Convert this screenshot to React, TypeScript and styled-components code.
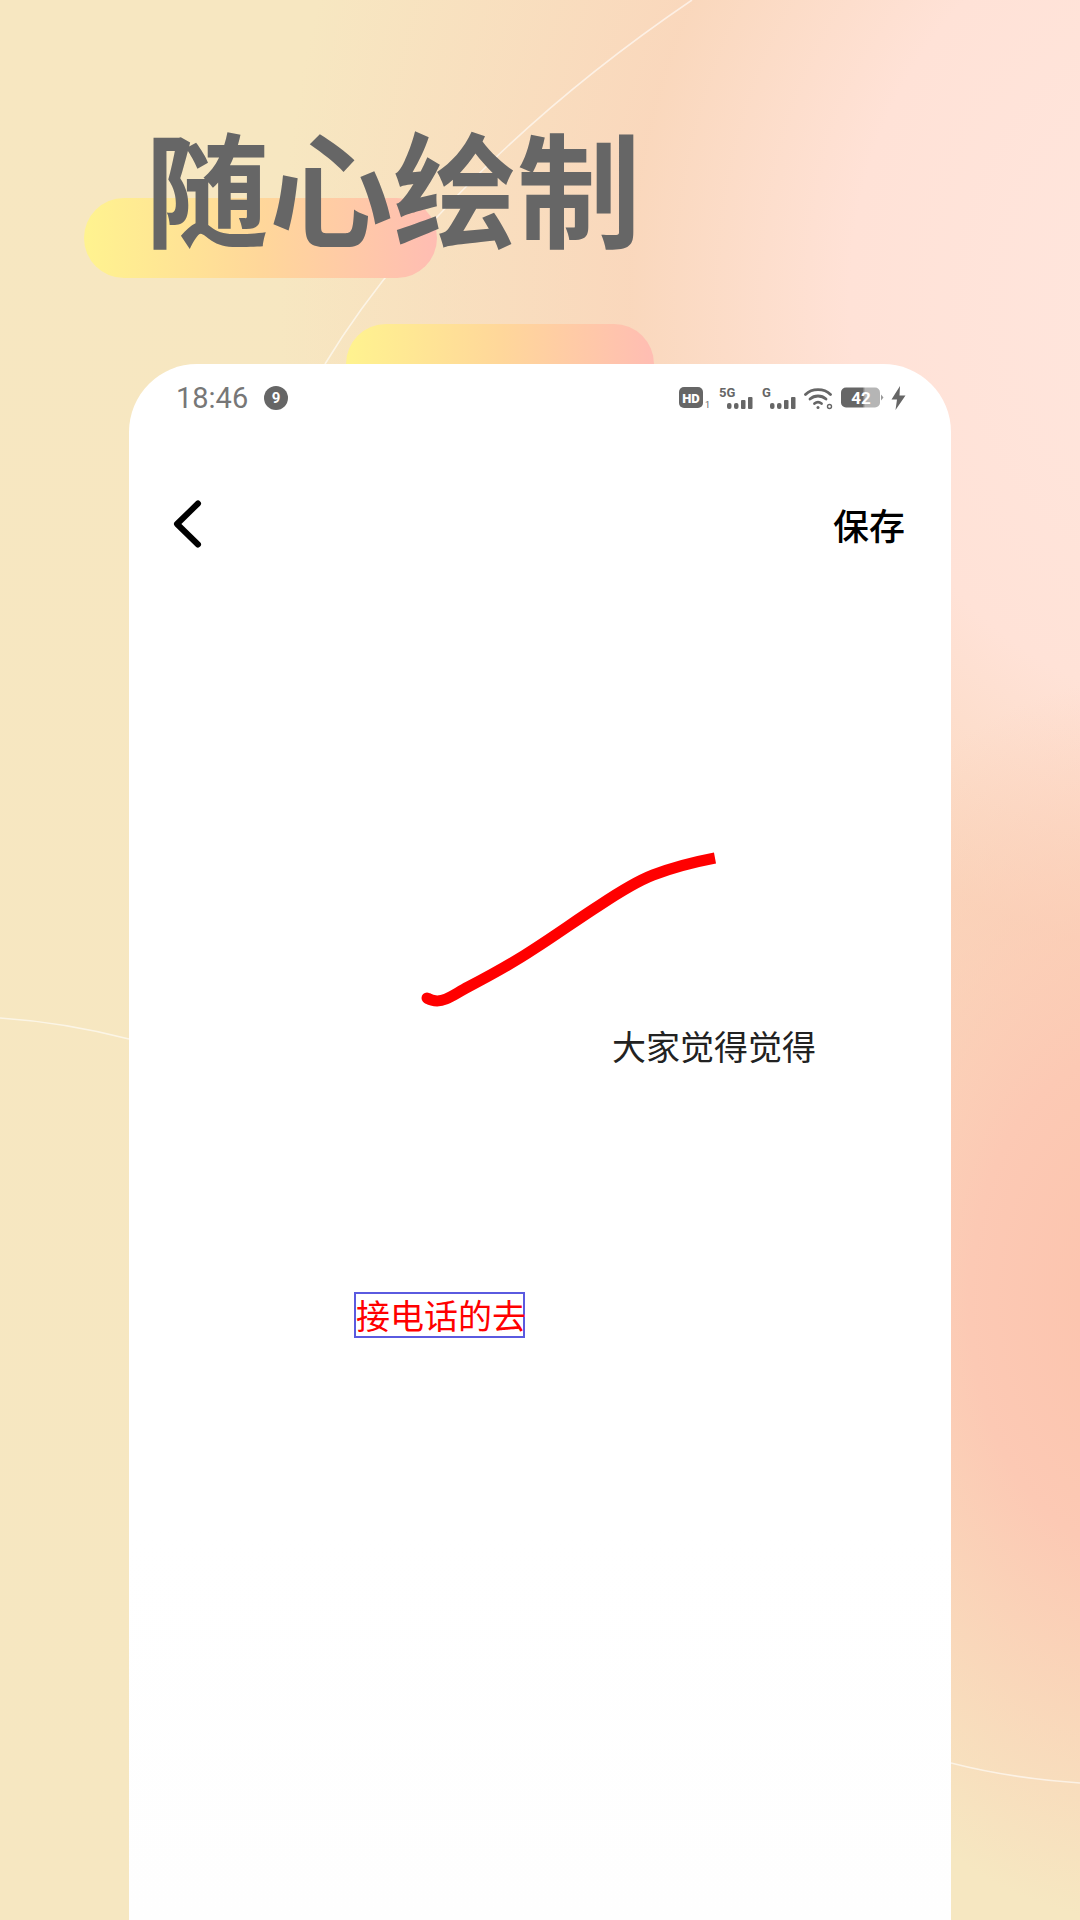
import React from 'react'
import styled, { createGlobalStyle } from 'styled-components'

const GlobalStyle = createGlobalStyle`
  html, body {
    margin: 0;
    padding: 0;
  }
  body {
    font-family: "Noto Sans CJK SC", "Noto Sans", sans-serif;
  }
`

const Page = styled.div`
  position: relative;
  width: 1080px;
  height: 1920px;
  overflow: hidden;
  display: flex;
  flex-direction: column;
  background:
    radial-gradient(ellipse 400px 620px at 1130px 1300px, #fcc3ad 0%, #fcc9b4 40%, rgba(252, 205, 184, 0) 100%),
    radial-gradient(ellipse 920px 1060px at 1200px 300px, #ffe6de 0%, #ffe2d7 38%, rgba(250, 214, 188, 0.9) 62%, rgba(247, 230, 193, 0) 100%),
    linear-gradient(180deg, #f7e7c1 0%, #f6e7c1 100%);
`

const Arcs = styled.svg`
  position: absolute;
  inset: 0;
`

const Pill = styled.div<{ $left: number; $top: number; $width: number }>`
  position: absolute;
  left: ${({ $left }) => $left}px;
  top: ${({ $top }) => $top}px;
  width: ${({ $width }) => $width}px;
  height: 80px;
  border-radius: 40px;
  background: linear-gradient(90deg, #fff38f 0%, #ffd79a 50%, #ffbdb3 100%);
`

const Hero = styled.div`
  position: relative;
  height: 364px;
  flex: none;
  padding: 109px 0 0 145px;
  box-sizing: border-box;
`

const Title = styled.h1`
  margin: 0;
  font-size: 124px;
  line-height: 150px;
  font-weight: 700;
  color: #666666;
`

const Card = styled.div`
  position: relative;
  flex: 1;
  margin-left: 129px;
  width: 822px;
  display: flex;
  flex-direction: column;
  background: #ffffff;
  border-radius: 68px 68px 0 0;
`

const StatusBar = styled.div`
  height: 68px;
  flex: none;
  display: flex;
  align-items: center;
  justify-content: space-between;
  padding: 0 45px 0 47px;
`

const StatusLeft = styled.div`
  display: flex;
  align-items: center;
  gap: 16px;
`

const StatusRight = styled.div`
  display: flex;
  align-items: center;
  gap: 7px;
`

const Clock = styled.span`
  font-family: Roboto, sans-serif;
  font-size: 29px;
  color: #777777;
`

const NavBar = styled.div`
  height: 186px;
  flex: none;
  display: flex;
  align-items: center;
  justify-content: space-between;
  padding: 0 46px 2px 44px;
  box-sizing: border-box;
`

const SaveButton = styled.span`
  font-size: 36px;
  font-weight: 500;
  color: #000000;
`

const Canvas = styled.div`
  position: relative;
  flex: 1;
  background: linear-gradient(180deg, #ffffff 70%, #fefefe 100%);
`

const Stroke = styled.svg`
  position: absolute;
  left: 271px;
  top: 212px;
`

const Note = styled.span`
  position: absolute;
  left: 483px;
  top: 405px;
  font-size: 34px;
  line-height: 46px;
  color: #222222;
  white-space: nowrap;
`

const SelectedNote = styled.span`
  position: absolute;
  left: 225px;
  top: 674px;
  width: 171px;
  height: 46px;
  box-sizing: border-box;
  border: 2px solid #5a5ae0;
  font-size: 34px;
  line-height: 42px;
  color: #ff0000;
  white-space: nowrap;
`

const NotifyBadge = () => (
  <svg width="24" height="24" viewBox="0 0 24 24">
    <circle cx="12" cy="12" r="12" fill="#666" />
    <text x="12" y="17" textAnchor="middle" fontSize="15" fontFamily="Roboto" fontWeight="700" fill="#fff">9</text>
  </svg>
)

const HdIcon = () => (
  <svg width="32" height="22" viewBox="0 0 32 22">
    <rect x="0" y="0" width="24" height="21" rx="5" fill="#666" />
    <text x="12" y="15.500" textAnchor="middle" fontSize="13" fontFamily="Roboto" fontWeight="900" fill="#fff">HD</text>
    <text x="26" y="21" fontSize="9" fontFamily="Roboto" fill="#666">1</text>
  </svg>
)

const SignalIcon = ({ label }: { label: string }) => (
  <svg width="36" height="24" viewBox="0 0 36 24">
    <text x="1" y="11" fontSize="13" fontFamily="Roboto" fontWeight="700" fill="#666">{label}</text>
    <rect x="9" y="17" width="4.500" height="6" rx="2" fill="#666" />
    <rect x="16" y="17" width="4.500" height="6" rx="2" fill="#666" />
    <rect x="23" y="14" width="4.500" height="9" rx="1" fill="#666" />
    <rect x="30" y="11" width="4.500" height="12" rx="1" fill="#666" />
  </svg>
)

const WifiIcon = () => (
  <svg width="30" height="24" viewBox="0 0 30 24" fill="none" stroke="#666" strokeWidth="2.800" strokeLinecap="round">
    <path d="M1.500 8.500C8 2 20 2 26.500 8.500" />
    <path d="M6 13C10.500 9 17.500 9 22 13" />
    <path d="M10.500 17.500C12.600 15.800 15.400 15.800 17.500 17.500" />
    <circle cx="14" cy="21.500" r="1.500" fill="#666" stroke="none" />
    <circle cx="25.500" cy="20.500" r="2" stroke="#666" strokeWidth="1.400" />
  </svg>
)

const BatteryIcon = () => (
  <svg width="43" height="22" viewBox="0 0 43 22">
    <defs>
      <linearGradient id="batteryFill" x1="0" x2="1" y1="0" y2="0">
        <stop offset="0.550" stopColor="#666" />
        <stop offset="0.620" stopColor="#b5b5b5" />
      </linearGradient>
    </defs>
    <rect x="0" y="0.500" width="39" height="20" rx="5" fill="url(#batteryFill)" />
    <path d="M40 7.500l2.500 3-2.500 3z" fill="#999" />
    <text x="20" y="17" textAnchor="middle" fontSize="17" fontFamily="Roboto" fontWeight="700" fill="#fff">42</text>
  </svg>
)

const BoltIcon = () => (
  <svg width="15" height="24" viewBox="0 0 15 24">
    <path d="M9 0L0.500 13.500H6L4.500 24L14.500 9.500H8.500z" fill="#666" />
  </svg>
)

const BackIcon = () => (
  <svg width="30" height="50" viewBox="0 0 30 50" fill="none" stroke="#000" strokeWidth="6" strokeLinecap="round" strokeLinejoin="round">
    <path d="M25 4.500L4 25L25 45.500" />
  </svg>
)

export default function App() {
  return (
    <Page>
      <GlobalStyle />
      <Arcs width="1080" height="1920" viewBox="0 0 1080 1920" fill="none" stroke="#ffffff" strokeOpacity="0.6" strokeWidth="1.600">
        <path d="M692 0C530 110 400 240 325 364" />
        <path d="M0 1018C45 1021 90 1029 129 1039" />
        <path d="M951 1763C990 1773 1035 1780 1080 1783" />
      </Arcs>
      <Pill $left={84} $top={198} $width={353} />
      <Pill $left={346} $top={324} $width={308} />
      <Hero>
        <Title>随心绘制</Title>
      </Hero>
      <Card>
        <StatusBar>
          <StatusLeft>
            <Clock>18:46</Clock>
            <NotifyBadge />
          </StatusLeft>
          <StatusRight>
            <HdIcon />
            <SignalIcon label="5G" />
            <SignalIcon label="G" />
            <WifiIcon />
            <BatteryIcon />
            <BoltIcon />
          </StatusRight>
        </StatusBar>
        <NavBar>
          <BackIcon />
          <SaveButton>保存</SaveButton>
        </NavBar>
        <Canvas>
          <Stroke width="340" height="190" viewBox="0 0 340 190" fill="none">
            <path
              d="M27 168C32 171 39 172 46 169C53 166 60 161 68 157C91 145 113 133 134 119C156 105 178 89 200 75C218 63 235 52 253 45C274 37 294 32 315 28"
              stroke="#ff0000"
              strokeWidth="11"
              strokeLinejoin="round"
            />
            <circle cx="27" cy="168" r="5.500" fill="#ff0000" />
          </Stroke>
          <Note>大家觉得觉得</Note>
          <SelectedNote>接电话的去</SelectedNote>
        </Canvas>
      </Card>
    </Page>
  )
}
